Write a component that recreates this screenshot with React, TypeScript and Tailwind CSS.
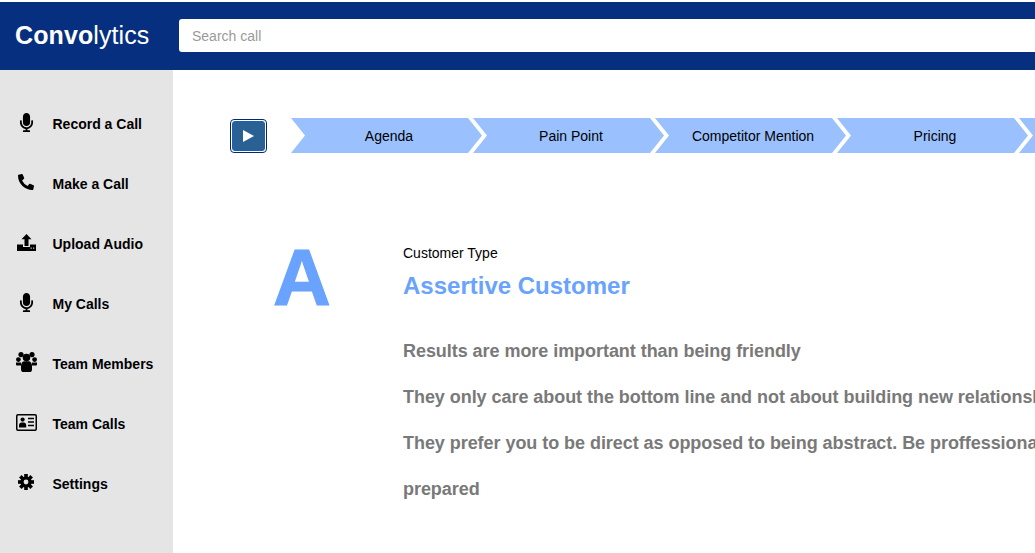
import { FaMicrophone, FaPhoneAlt } from "react-icons/fa";
import type { ReactNode } from "react";

const Mic = () => <FaMicrophone className="text-[19px]" />;

const UploadIcon = () => (
  <svg width="19" height="17" viewBox="0 0 19 17">
    <polygon points="9.5,0 14.5,5.2 11.5,5.2 11.5,12 7.5,12 7.5,5.2 4.5,5.2" fill="#000" />
    <path d="M0 10.5h6v2.6h7v-2.6h6v6.5H0z" fill="#000" />
    <rect x="13.5" y="13.5" width="1.3" height="1.3" fill="#bbb" />
    <rect x="16" y="13.5" width="1.3" height="1.3" fill="#bbb" />
  </svg>
);

const UsersIcon = () => (
  <svg width="21" height="20" viewBox="0 0 21 20">
    <circle cx="5" cy="2.6" r="2.6" fill="#000" />
    <circle cx="16" cy="2.6" r="2.6" fill="#000" />
    <circle cx="2.4" cy="7.6" r="2.4" fill="#000" />
    <circle cx="18.6" cy="7.6" r="2.4" fill="#000" />
    <circle cx="10.5" cy="5.6" r="3.8" fill="#000" />
    <path d="M0 10.5h5v3H1.2C.4 13.5 0 13 0 12.2zM21 10.5h-5v3h3.8c.8 0 1.2-.5 1.2-1.3z" fill="#000" />
    <path d="M5 14c0-3 1.6-4.8 3.4-4.8h4.2C14.4 9.2 16 11 16 14v3.4c0 1.6-1 2.6-2.6 2.6H7.6C6 20 5 19 5 17.4z" fill="#000" />
  </svg>
);

const CardIcon = () => (
  <svg width="21" height="17" viewBox="0 0 21 17">
    <rect x="0.75" y="0.75" width="19.5" height="15.5" rx="1.2" fill="none" stroke="#000" strokeWidth="1.5" />
    <circle cx="6.6" cy="5.6" r="2.1" fill="#000" />
    <path d="M3 13.5v-2.2C3 9.4 4.2 8.4 5.4 8.4h2.4c1.2 0 2.4 1 2.4 2.9v2.2z" fill="#000" />
    <path d="M12 4.5h6M12 8h6M12 11.5h6" stroke="#000" strokeWidth="1.3" />
  </svg>
);

const GearIcon = () => (
  <svg width="16" height="16" viewBox="0 0 16 16">
    {[0, 45, 90, 135, 180, 225, 270, 315].map((a) => (
      <rect key={a} x="6.2" y="0" width="3.6" height="4" fill="#000" transform={`rotate(${a} 8 8)`} />
    ))}
    <circle cx="8" cy="8" r="5.6" fill="#000" />
    <circle cx="8" cy="8" r="2.4" fill="#e5e5e5" />
  </svg>
);

const nav: { label: string; icon: ReactNode }[] = [
  { label: "Record a Call", icon: <Mic /> },
  { label: "Make a Call", icon: <FaPhoneAlt className="text-[16px]" /> },
  { label: "Upload Audio", icon: <UploadIcon /> },
  { label: "My Calls", icon: <Mic /> },
  { label: "Team Members", icon: <UsersIcon /> },
  { label: "Team Calls", icon: <CardIcon /> },
  { label: "Settings", icon: <GearIcon /> },
];

const steps = ["Agenda", "Pain Point", "Competitor Mention", "Pricing", "Next Steps"];

export default function App() {
  return (
    <div className="w-[1035px] h-[553px] overflow-hidden bg-white flex flex-col font-['Liberation_Sans',Arial,sans-serif]">
      <header className="mt-[2px] h-[68px] shrink-0 bg-[#06307f] flex items-center pl-[15px]">
        <div className="w-[164px] shrink-0 text-[25px] leading-none text-white tracking-[0.1px] -mt-[2px]">
          <span className="font-bold">Convo</span>
          <span className="font-normal">lytics</span>
        </div>
        <div className="h-[33px] -mt-[1px] flex-1 bg-white rounded-l-[3px] flex items-center pl-[13px] pt-[1px] text-[14px] text-[#9a9a9a]">
          Search call
        </div>
      </header>
      <div className="flex flex-1 min-h-0">
        <aside className="w-[173px] shrink-0 bg-[#e5e5e5] flex flex-col pt-[24px]">
          {nav.map(({ label, icon }) => (
            <div key={label} className="h-[60px] flex items-center pl-[15px] text-[14px] font-bold text-black">
              <span className="w-[22px] h-[22px] flex items-center justify-center -mt-[4px]">{icon}</span>
              <span className="ml-[15.5px]">{label}</span>
            </div>
          ))}
        </aside>
        <main className="flex-1 min-w-0 pl-[57px] pt-[48px]">
          <div className="flex items-center h-[35px]">
            <div className="w-[37px] h-[34px] shrink-0 rounded-[4px] border border-[#0b2a5c] bg-white p-px">
              <div className="w-full h-full rounded-[3px] border border-[#1a5fc0] bg-[#2a6195] flex items-center justify-center">
                <svg width="11" height="12" viewBox="0 0 11 12"><polygon points="0,0 11,6 0,12" fill="#fff" /></svg>
              </div>
            </div>
            <div className="flex ml-[24px] shrink-0">
              {steps.map((s, i) => (
                <div
                  key={s}
                  className={`w-[191px] h-[35px] shrink-0 bg-[#9bc0fe] flex items-center justify-center pl-[5px] pt-[2px] text-[14px] text-black [clip-path:polygon(0_0,177px_0,191px_50%,177px_100%,0_100%,14px_50%)] ${i > 0 ? "-ml-[9px]" : ""}`}
                >
                  {s}
                </div>
              ))}
            </div>
          </div>
          <div className="flex mt-[90px] pl-[42px]">
            <div className="w-[131px] shrink-0 text-[80px] leading-none font-bold text-[#69a3fe] [-webkit-text-stroke:1.2px_#69a3fe] pl-px -mt-[5px]">A</div>
            <div className="min-w-0">
              <div className="text-[14px] leading-[20px] text-black">Customer Type</div>
              <div className="text-[24px] leading-[28px] mt-[9px] font-bold text-[#69a3fe] whitespace-nowrap">Assertive Customer</div>
              <div className="mt-[28px] text-[18px] leading-[46px] font-bold tracking-[-0.05px] text-[#797979] whitespace-nowrap">
                <p>Results are more important than being friendly</p>
                <p>They only care about the bottom line and not about building new relationships</p>
                <p>They prefer you to be direct as opposed to being abstract. Be proffessional and</p>
                <p>prepared</p>
              </div>
            </div>
          </div>
        </main>
      </div>
    </div>
  );
}
